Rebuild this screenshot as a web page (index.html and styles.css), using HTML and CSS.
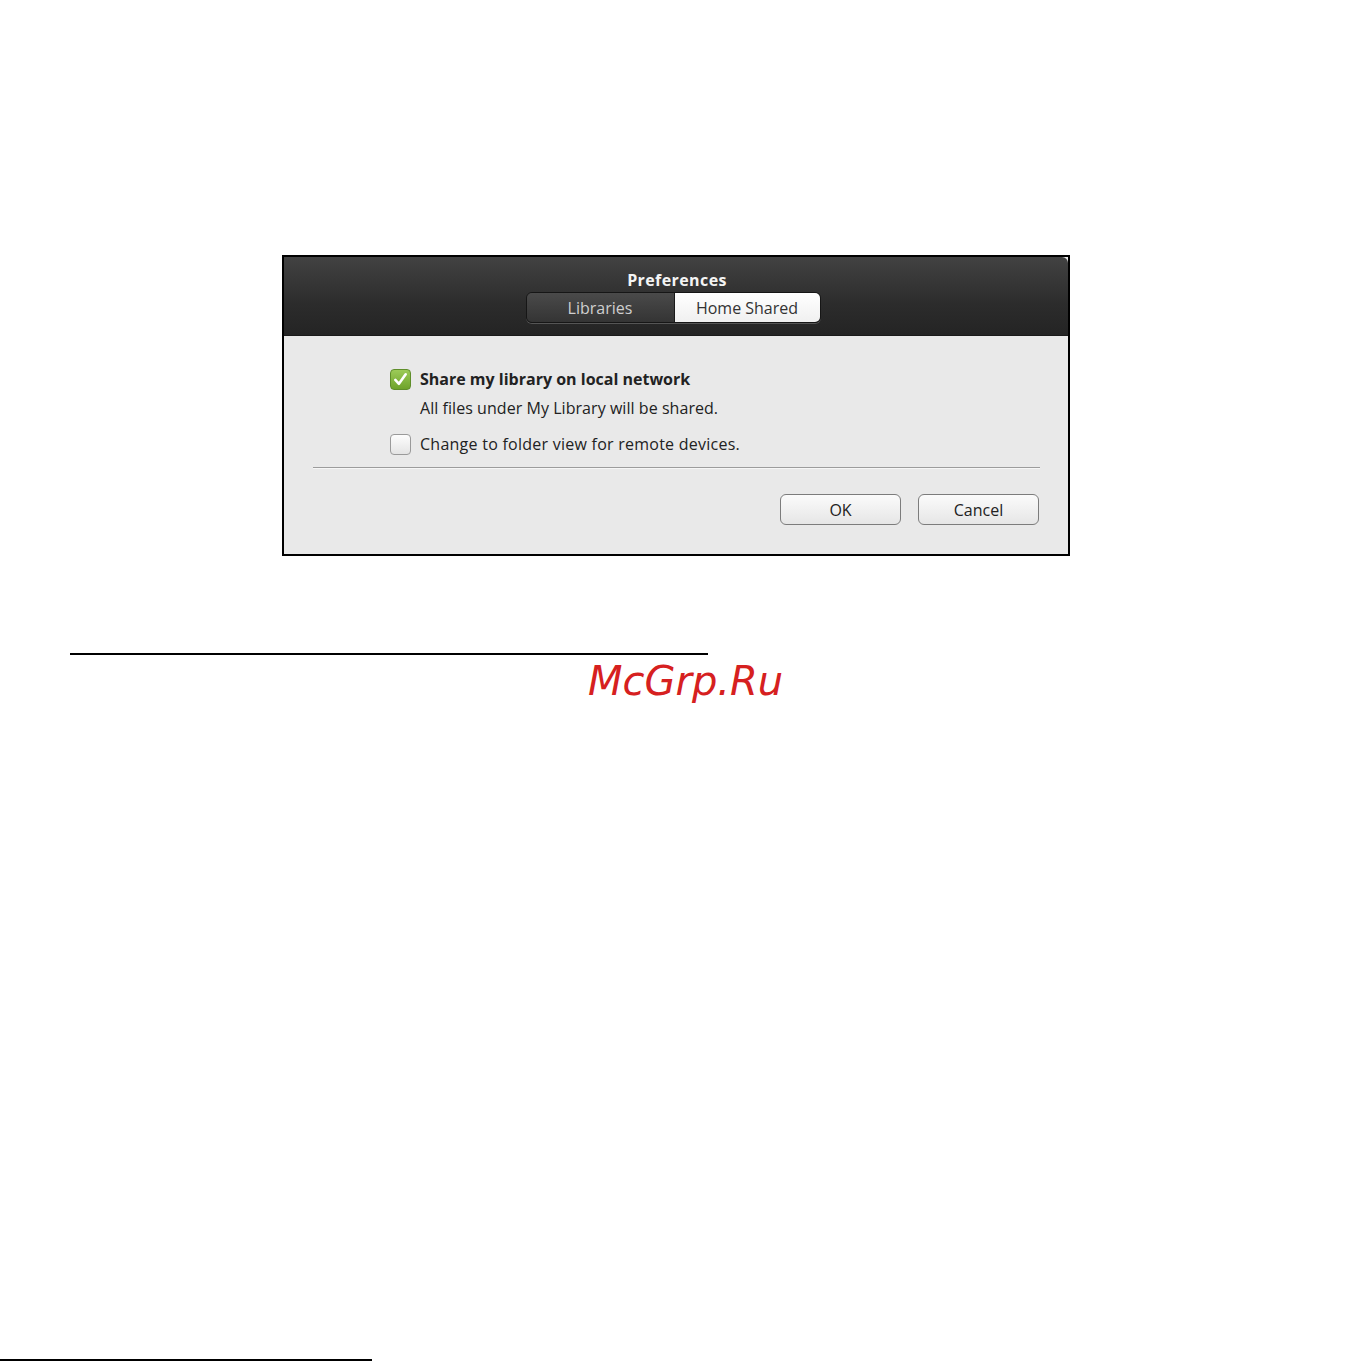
FILE: index.html
```html
<!DOCTYPE html>
<html>
<head>
<meta charset="utf-8">
<link rel="stylesheet" href="styles.css">
</head>
<body>
<div class="page">
  <div class="dialog">
    <div class="header">
      <div class="title">Preferences</div>
      <div class="segmented">
        <div class="seg seg-dark">Libraries</div>
        <div class="seg seg-light">Home Shared</div>
      </div>
    </div>
    <div class="content">
      <div class="options">
        <div class="opt">
          <span class="check checked">
            <svg viewBox="0 0 22 22" width="22" height="22"><path d="M5 11.5 L9.2 16 L17 5" fill="none" stroke="#fff" stroke-width="3" stroke-linecap="round" stroke-linejoin="round"/></svg>
          </span>
          <span class="label bold">Share my library on local network</span>
        </div>
        <div class="sub">All files under My Library will be shared.</div>
        <div class="opt opt2">
          <span class="check"></span>
          <span class="label">Change to folder view for remote devices.</span>
        </div>
      </div>
      <div class="sep"></div>
      <div class="buttons">
        <div class="btn">OK</div>
        <div class="btn">Cancel</div>
      </div>
    </div>
  </div>
  <div class="rule"></div>
  <div class="brand">McGrp.Ru</div>
  <div class="footer-line"></div>
</div>
</body>
</html>
```
FILE: styles.css
```css
html, body { margin: 0; padding: 0; background: #fff; }
.page { width: 1361px; height: 1361px; position: relative; overflow: hidden; display: flex; flex-direction: column; }
.dialog {
  margin: 255px 0 0 282px;
  width: 784px;
  height: 297px;
  border: 2px solid #000;
  background: #e9e9e9;
  display: flex; flex-direction: column;
  font-family: "Open Sans", "Noto Sans", sans-serif;
}
.header {
  height: 79px;
  background: linear-gradient(#424242, #2c2c2c 60%, #242424);
  border-bottom: 1px solid #1a1a1a;
  border-top-right-radius: 6px;
  display: flex; flex-direction: column; align-items: center;
  box-sizing: border-box;
  padding-top: 12px;
}
.title { color: #f4f4f4; font-weight: bold; font-size: 16px; line-height: 22px; letter-spacing: 0.4px; margin-left: 2px; }
.segmented {
  margin-top: 1px;
  display: flex; height: 31px; box-sizing: border-box;
  border: 1px solid #161616;
  border-radius: 6px;
  overflow: hidden;
  box-shadow: 0 1px 0 #555;
  margin-right: 6px;
}
.seg { display: flex; align-items: center; justify-content: center; font-size: 16px; letter-spacing: 0; }
.seg-dark { width: 147px; background: linear-gradient(#4a4a4a, #343434); color: #cfcfcf; border-right: 1px solid #1a1a1a; }
.seg-light { width: 145px; background: linear-gradient(#ffffff, #f0f0f0); color: #333; }
.content { flex: 1; display: flex; flex-direction: column; }
.options { padding: 32px 0 0 106px; }
.opt { display: flex; align-items: center; height: 22px; }
.opt2 { margin-top: 14px; }
.check {
  width: 21px; height: 21px; box-sizing: border-box;
  border: 1px solid #9a9a9a; border-radius: 4px;
  background: linear-gradient(#fdfdfd, #e4e4e4);
  display: flex; align-items: center; justify-content: center;
  margin-right: 9px; flex: none;
}
.check.checked { background: linear-gradient(#9ccb58, #6ea32a); border-color: #5f8e2a; }
.check svg { width: 19px; height: 19px; }
.label { font-size: 16px; color: #222; letter-spacing: 0.25px; }
.bold { font-weight: bold; letter-spacing: 0; }
.sub { margin: 7px 0 0 30px; font-size: 16px; color: #222; letter-spacing: 0.05px; line-height: 22px; }
.sep { margin: 12px 28px 0 29px; height: 1px; background: #9c9c9c; border-bottom: 1px solid #f6f6f6; }
.buttons { display: flex; justify-content: flex-end; gap: 17px; margin: 25px 29px 0 0; }
.btn {
  width: 121px; height: 31px; box-sizing: border-box;
  border: 1px solid #7c7c7c; border-radius: 6px;
  background: linear-gradient(#fbfbfb, #e6e6e6);
  display: flex; align-items: center; justify-content: center;
  font-size: 16px; color: #222; letter-spacing: 0;
}
.rule { margin: 97px 0 0 70px; width: 638px; height: 2px; background: #000; }
.brand {
  margin: 2px 0 0 588px;
  font-family: "DejaVu Sans", sans-serif; font-style: italic;
  font-size: 40px; line-height: 48px; color: #d62020;
}
.footer-line { position: absolute; left: 0; bottom: 0; width: 372px; height: 2px; background: #000; }
```
